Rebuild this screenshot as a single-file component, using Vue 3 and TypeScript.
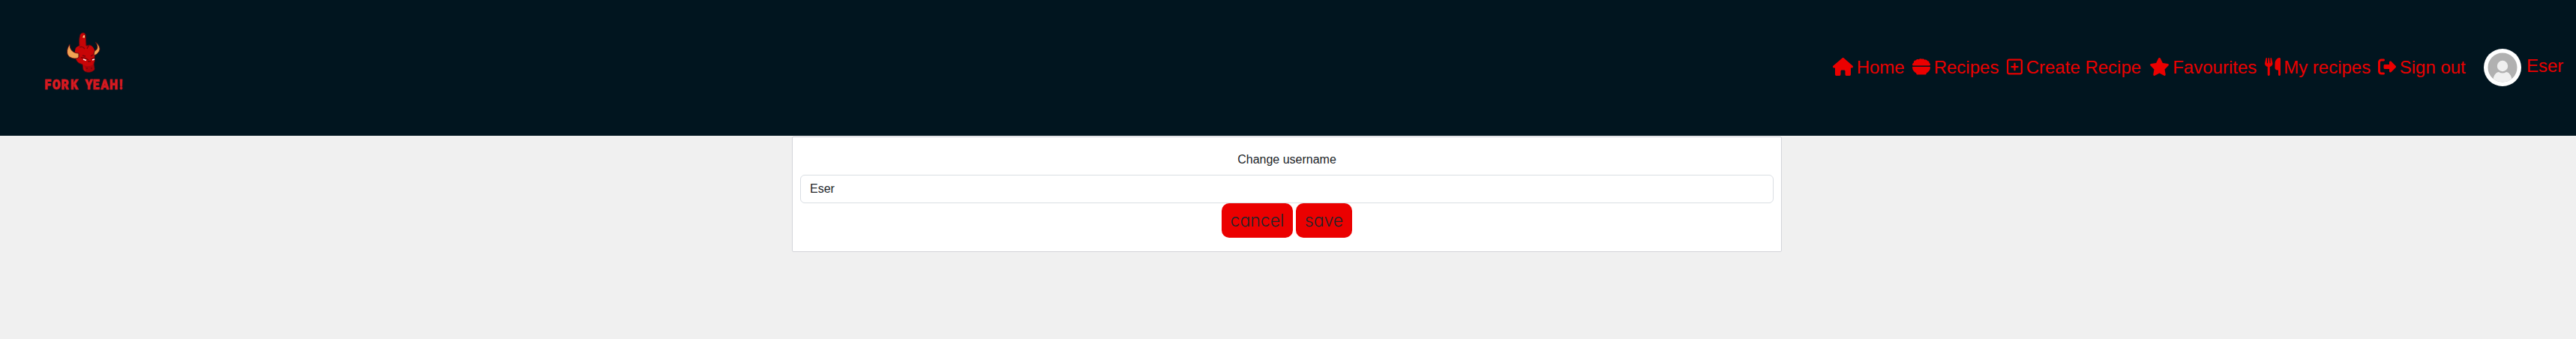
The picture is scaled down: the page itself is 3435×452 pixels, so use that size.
<script setup lang="ts">
interface NavItem {
  label: string
  box: string
  width: number
  path: string
}

const items: NavItem[] = [
  { label: 'Home', box: '0 0 576 512', width: 27, path: 'M575.8 255.5c0 18-15 32.1-32 32.1l-32 0 .7 160.2c0 2.7-.2 5.4-.5 8.1l0 16.2c0 22.1-17.9 40-40 40l-16 0c-1.1 0-2.2 0-3.3-.1c-1.4 .1-2.8 .1-4.2 .1L416 512l-24 0c-22.1 0-40-17.9-40-40l0-24 0-64c0-17.7-14.3-32-32-32l-64 0c-17.7 0-32 14.3-32 32l0 64 0 24c0 22.1-17.9 40-40 40l-24 0-31.9 0c-1.5 0-3-.1-4.5-.2c-1.2 .1-2.4 .2-3.6 .2l-16 0c-22.1 0-40-17.9-40-40l0-112c0-.9 0-1.9 .1-2.8l0-69.7-32 0c-18 0-32-14-32-32.1c0-9 3-17 10-24L266.4 8c7-7 15-8 22-8s15 2 21 7L564.8 231.5c8 7 12 15 11 24z' },
  { label: 'Recipes', box: '0 0 512 512', width: 24, path: 'M24 224C8 224 0 213 1 199C5 171 20 151 42 140C28 100 61 66 100 73C116 42 152 32 181 49C207 24 241 20 270 35C304 26 334 33 350 57C386 42 423 58 430 93C463 90 486 111 480 144C499 156 509 175 511 199C512 213 504 224 488 224ZM24 256H488C503 256 512 267 511 281C507 350 462 409 400 435V448C400 466 386 480 368 480H144C126 480 112 466 112 448V435C50 409 5 350 1 281C0 267 9 256 24 256Z' },
  { label: 'Create Recipe', box: '0 0 448 512', width: 21, path: 'M64 80c-8.8 0-16 7.2-16 16V416c0 8.8 7.2 16 16 16H384c8.8 0 16-7.2 16-16V96c0-8.8-7.2-16-16-16H64zM0 96C0 60.7 28.7 32 64 32H384c35.3 0 64 28.7 64 64V416c0 35.3-28.7 64-64 64H64c-35.3 0-64-28.7-64-64V96zM200 344V280H136c-13.3 0-24-10.7-24-24s10.7-24 24-24h64V168c0-13.3 10.7-24 24-24s24 10.7 24 24v64h64c13.3 0 24 10.7 24 24s-10.7 24-24 24H248v64c0 13.3-10.7 24-24 24s-24-10.7-24-24z' },
  { label: 'Favourites', box: '0 0 576 512', width: 27, path: 'M316.9 18C311.6 7 300.4 0 288.1 0s-23.4 7-28.8 18L195 150.3 51.4 171.5c-12 1.8-22 10.2-25.7 21.7s-.7 24.2 7.9 32.7L137.8 329 113.2 474.7c-2 12 3 24.2 12.9 31.3s23 8 33.8 2.3l128.3-68.5 128.3 68.5c10.8 5.7 23.9 4.9 33.8-2.3s14.9-19.3 12.9-31.3L438.5 329 542.7 225.9c8.6-8.5 11.7-21.2 7.9-32.7s-13.7-19.9-25.7-21.7L381.2 150.3 316.9 18z' },
  { label: 'My recipes', box: '0 0 448 512', width: 21, path: 'M416 0C400 0 288 32 288 176V288c0 35.3 28.7 64 64 64h32V480c0 17.7 14.3 32 32 32s32-14.3 32-32V352 240 32c0-17.7-14.3-32-32-32zM64 16C64 7.8 57.9 1 49.7 .1S34.2 4.6 32.4 12.5L2.1 148.8C.7 155.1 0 161.5 0 167.9c0 45.9 35.1 83.6 80 87.7V480c0 17.7 14.3 32 32 32s32-14.3 32-32V255.6c44.9-4.1 80-41.8 80-87.7c0-6.4-.7-12.8-2.1-19.1L191.6 12.5c-1.8-8-9.3-13.3-17.4-12.4S160 7.8 160 16V150.2c0 5.4-4.4 9.8-9.8 9.8c-5.1 0-9.3-3.9-9.8-9L127.9 14.6C127.2 6.3 120.3 0 112 0s-15.2 6.3-15.9 14.6L83.7 151c-.5 5.1-4.7 9-9.8 9c-5.4 0-9.8-4.4-9.8-9.8V16z' },
  { label: 'Sign out', box: '0 0 512 512', width: 24, path: 'M377.9 105.9L500.7 228.7c7.2 7.2 11.3 17.1 11.3 27.3s-4.1 20.1-11.3 27.3L377.9 406.1c-6.4 6.4-15 9.9-24 9.9c-18.7 0-33.9-15.2-33.9-33.9l0-62.1-128 0c-17.7 0-32-14.3-32-32l0-64c0-17.7 14.3-32 32-32l128 0 0-62.1c0-18.7 15.2-33.9 33.9-33.9c9 0 17.6 3.6 24 9.9zM160 96L96 96c-17.7 0-32 14.3-32 32l0 256c0 17.7 14.3 32 32 32l64 0c17.7 0 32 14.3 32 32s-14.3 32-32 32l-64 0c-53 0-96-43-96-96L0 128C0 75 43 32 96 32l64 0c17.7 0 32 14.3 32 32s-14.3 32-32 32z' },
]

const username = 'Eser'
</script>

<template>
  <header class="navbar">
    <svg class="logo" viewBox="40 20 150 120" width="150" height="120" aria-label="Fork Yeah!">
      <g stroke="#590c12" stroke-width="1" stroke-linejoin="round">
        <path d="M106 62C105 55 106 49 107 46C109 43 113 43 114 46L115 61L120 60C124 62 126 66 126 71L126 82L125 86L126 92C124 97 114 98 111 93L110 86L105 84C101 81 99 74 101 64Z" fill="#c60507" />
        <path d="M102 63C107 59 114 61 115 65C120 58 125 62 126 68L126 82C121 86 108 87 103 81C99 76 99 67 102 63Z" fill="#c80507" stroke="none" />
        <path d="M93 59C88 66 88 75 95 77C99 79 104 78 105 76L105 71C98 71 93 67 93 59Z" fill="#f1a353" />
        <path d="M127 56C133 60 135 66 131 70C129 73 126 74 125 73L126 68C131 66 131 61 127 56Z" fill="#f1a353" />
      </g>
      <path d="M110 50l1.5-3 1.5 0v3.5z" fill="#ffc27c" />
      <path d="M112 87q6 3 13-1l1 7q-4 4-11 2z" fill="#a80309" />
      <path d="M108 77q5-1 10 3m3-1l5-2M106 63q4-2 7 2M116 65q2-4 3-5M110 74l4 1m7 0l3-2M117 82l4 0M115 91h2m4 0h2" fill="none" stroke="#790409" stroke-width="1.3" />
      <path d="M111 79l4 1.5M123 80l3-1" stroke="#fff2ed" stroke-width="1.5" />
      <g transform="scale(.83 1)">
        <text class="wordmark" y="119" x="71.8 84.2 98.2 113.3 136.7 149.2 161.8 175.8 191.7">FORKYEAH!</text>
      </g>
    </svg>
    <nav class="links">
      <a v-for="item in items" :key="item.label" class="link">
        <svg class="icon" :viewBox="item.box" :width="item.width" height="24"><path :d="item.path" /></svg>
        <span>{{ item.label }}</span>
      </a>
    </nav>
    <a class="profile">
      <svg width="50" height="50" viewBox="0 0 50 50">
        <defs><clipPath id="portrait"><circle cx="25" cy="25" r="19.5" /></clipPath></defs>
        <circle cx="25" cy="25" r="25" fill="#fff" />
        <g clip-path="url(#portrait)">
          <rect width="50" height="50" fill="#b1b1b1" />
          <circle cx="25" cy="23" r="7.2" fill="#f0f0f0" />
          <path d="M12 46C12 35 17 31 20 31Q25 34 30 31C33 31 38 35 38 46Z" fill="#f0f0f0" />
        </g>
      </svg>
      <span class="name">{{ username }}</span>
    </a>
  </header>
  <main>
    <form class="card" @submit.prevent>
      <label for="username">Change username</label>
      <input id="username" type="text" :value="username" />
      <div class="actions">
        <button type="button">cancel</button>
        <button type="submit">save</button>
      </div>
    </form>
  </main>
</template>

<style>
body { background: #f0f0f0; }
</style>

<style scoped>
* { box-sizing: border-box; }
.navbar {
  display: flex;
  align-items: center;
  height: 181px;
  padding: 0 0 1px 40px;
  background: #01151f;
  color: #eb0000;
  font: 24px/36px "Liberation Sans", Arial, sans-serif;
}
.logo { align-self: flex-start; margin-top: 20px; }
.wordmark {
  font: 900 18.8px Roboto, sans-serif;
  fill: #e31c23;
  stroke: #c5171e;
  stroke-width: .9px;
}
.links {
  display: grid;
  grid-template-columns: 106px 126px 189.5px 154px 151.5px 141px;
  margin-left: auto;
}
.link { display: flex; gap: 4.7px; white-space: nowrap; }
.icon { flex: none; margin-top: 5px; fill: currentColor; }
.profile { display: flex; align-items: center; width: 123px; gap: 7px; }
.profile svg { flex: none; }
.name { margin-top: -4px; }
.card {
  width: 1320px;
  height: 154px;
  margin: 1px auto 0 1056px;
  padding: 18px 10px 0;
  border: 1px solid #d3d4d9;
  border-radius: 2px;
  background: #fff;
  color: #212529;
  text-align: center;
  font: 16px/24px "Liberation Sans", Arial, sans-serif;
}
label { display: block; height: 32px; }
input {
  display: block;
  width: 100%;
  height: 38px;
  padding: 6px 12px;
  border: 1px solid #d9dee3;
  border-radius: 6px;
  background: #fff;
  color: #212529;
  font: inherit;
}
.actions { display: flex; justify-content: center; gap: 4px; }
button {
  width: 95px;
  height: 46px;
  padding: 0;
  border: 0;
  border-radius: 10px;
  background: #eb0000;
  color: #212529;
  font: 350 23px/46px Inter, sans-serif;
  font-feature-settings: "cv11";
}
button:last-child { width: 75px; }
</style>
